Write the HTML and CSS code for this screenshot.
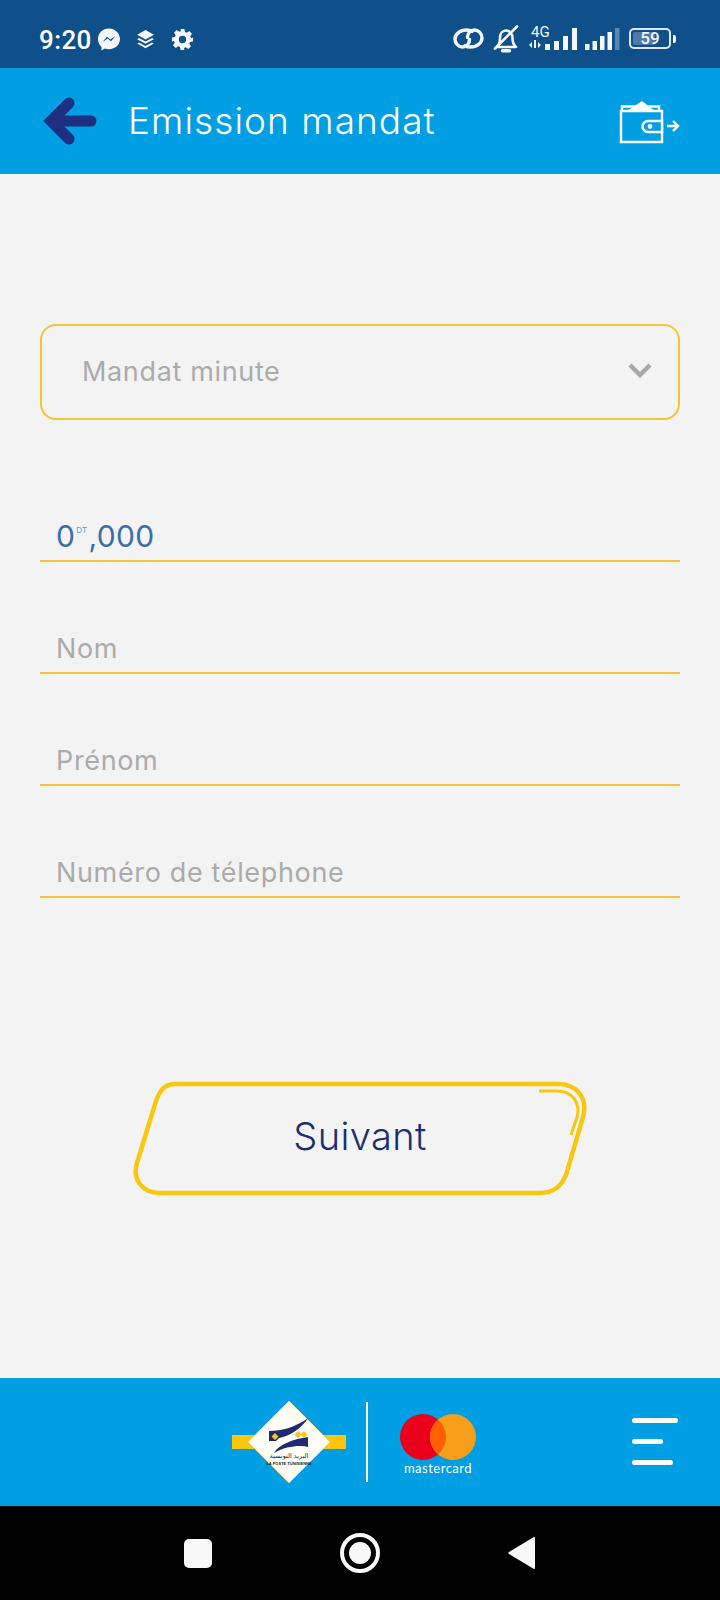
FILE: index.html
```html
<!DOCTYPE html>
<html lang="fr">
<head>
<meta charset="utf-8">
<title>Emission mandat</title>
<link rel="stylesheet" href="styles.css">
</head>
<body>
<div class="app">
  <div class="statusbar">
    <div class="status-left">
      <span class="clock">9:20</span>
      <svg class="ic-msg" viewBox="0 0 24 24"><path class="w" d="M12 1C5.800 1 1 5.500 1 11.600c0 3.200 1.300 5.900 3.500 7.800V23l3.400-1.900c1.300.4 2.700.6 4.100.6 6.200 0 11-4.500 11-10.100S18.200 1 12 1z"/><path class="bluefill" d="M5.500 14.500l4.500-5.300 3.300 2.700 5.200-3.400-4.500 5.300-3.300-2.700z"/></svg>
      <svg class="ic-layers" viewBox="0 0 20 20"><path class="w" d="M10 1l8 4.500-8 4.500-8-4.500z"/><path class="w" d="M3.800 8.600L10 12l6.200-3.400 1.800 1.100-8 4.400-8-4.400z"/><path class="w" d="M3.800 12.800L10 16.200l6.200-3.400 1.800 1.100-8 4.400-8-4.400z"/></svg>
      <svg class="ic-gear" viewBox="0 0 24 24"><path class="w" fill-rule="evenodd" d="M10 1h4l.6 3.100 1.900.8 2.600-1.800 2.800 2.800-1.800 2.600.8 1.900L23 10v4l-3.100.6-.8 1.900 1.800 2.600-2.800 2.800-2.600-1.800-1.900.8L14 23h-4l-.6-3.100-1.900-.8-2.600 1.800-2.800-2.800 1.800-2.600-.8-1.900L1 14v-4l3.100-.6.800-1.900-1.800-2.600 2.800-2.800 2.600 1.800 1.900-.8zM12 8.200a3.800 3.800 0 1 0 0 7.600 3.800 3.800 0 0 0 0-7.600z"/></svg>
    </div>
    <div class="status-right">
      <svg class="ic-link" viewBox="0 0 31 21"><path class="st" d="M19 3.300C17.500 2.400 15.500 2 13.500 2 7 2 2 6 2 11c0 4.500 3.400 8 7.500 8 4.300 0 7-3.500 7-7.500"/><path class="st" d="M12 17.700c1.500.9 3.500 1.300 5.500 1.300C24 19 29 15 29 10c0-4.500-3.400-8-7.500-8-4.300 0-7 3.500-7 7.500"/></svg>
      <svg class="ic-bell" viewBox="0 0 26 28"><path class="st2" d="M4 22c2.500-2.500 3-5 3-9 0-4.500 2.500-7.500 6-7.500s6.500 3 6.500 7.500c0 4 .5 6.500 3.500 9z"/><path class="st2" d="M2 23.500L24 1.500"/><path class="st3" d="M9.500 25.800h7"/></svg>
      <div class="sig">
        <span class="net">4G</span>
        <svg class="ic-bars-a" viewBox="0 0 50 24"><path class="w" d="M3 15l-3 3 3 3zM5 13h2v8H5zM9 15l3 3-3 3z"/><rect class="w" x="16" y="17" width="5" height="6"/><rect class="w" x="25" y="14" width="5" height="9"/><rect class="w" x="34" y="9" width="5" height="14"/><rect class="w" x="43" y="1" width="5" height="22"/></svg>
      </div>
      <svg class="ic-bars-b" viewBox="0 0 36 24"><rect class="w" x="0" y="17" width="4.500" height="6"/><rect class="w" x="7.500" y="14" width="4.500" height="9"/><rect class="w" x="15" y="9" width="4.500" height="14"/><rect class="w" x="22.500" y="5" width="4.500" height="18"/><rect class="dim" x="30" y="1" width="4.500" height="22"/></svg>
      <div class="battery">
        <div class="batt-box"><span class="batt-fill"></span><span class="batt-num">59</span></div>
        <span class="batt-nub"></span>
      </div>
    </div>
  </div>

  <header class="topbar">
    <svg class="back" viewBox="0 0 52 46"><path d="M24 5L6 23l18 18M6 23h40"/></svg>
    <h1 class="title">Emission mandat</h1>
    <svg class="wallet" viewBox="0 0 62 46"><path class="wl" d="M4 13V8.500h37V13"/><path class="wf" d="M9 13L24 3l13 10z"/><path class="wl" d="M3 13h41v31H3z"/><path class="wbg" d="M30 23h14v11H30a5.500 5.500 0 0 1 0-11z"/><circle class="wl" cx="32" cy="28.500" r="1.200"/><path class="wl" d="M49 28h11M55 23l5 5-5 5"/></svg>
  </header>

  <main class="content">
    <div class="select">
      <span class="select-text">Mandat minute</span>
      <svg class="chevron" viewBox="0 0 24 16"><path d="M2 3l10 10L22 3"/></svg>
    </div>
    <div class="fields">
      <div class="field"><span class="amount">0<sup class="cur">DT</sup>,000</span></div>
      <div class="field"><span class="ph">Nom</span></div>
      <div class="field"><span class="ph">Prénom</span></div>
      <div class="field"><span class="ph">Numéro de télephone</span></div>
    </div>
    <button class="next" type="button">
      <svg class="next-shape" viewBox="0 0 460 116"><path class="o" d="M45 3H428C448 3 458 18 453 36L436 94C431 106 423 112 410 112H30C12 112 2 98 7 82L26 20C30 9 35 3 45 3z"/><path class="i" d="M409 10H427C442 10 451 22 447 36L441 54"/></svg>
      <span class="next-label">Suivant</span>
    </button>
  </main>

  <footer class="bottombar">
    <div class="brand">
      <svg class="poste" viewBox="0 0 114 84">
        <rect class="band" x="0" y="35" width="114" height="14"/>
        <path class="dia" d="M57 1L98 42 57 83 16 42z"/>
        <path class="navy" d="M37 31C50 31 64 27 76 18C70 28 58 36 47 38L44 41H37z"/>
        <path class="navy" d="M42 53C47 44 62 39 76 37V47C68 45 54 46 42 53z"/>
        <path class="gold" d="M43 33l3.500 3.500-3.500 3.500-3.500-3.500zM66 31l3.500 3.500-3.500 3.500-3.500-3.500zM72 31l3.500 3.500-3.500 3.500-3.500-3.500z"/>
        <text class="ar" x="57" y="58" text-anchor="middle" direction="rtl">البريد التونسية</text>
        <text class="fr" x="57" y="65" text-anchor="middle">LA POSTE TUNISIENNE</text>
      </svg>
      <span class="divider"></span>
      <div class="mc">
        <svg class="mc-circles" viewBox="0 0 76 46"><circle class="r" cx="23" cy="23" r="23"/><circle class="y" cx="53" cy="23" r="23"/><path class="m" d="M38 5.600a23 23 0 0 1 0 34.800 23 23 0 0 1 0-34.800z"/></svg>
        <span class="mc-text">mastercard</span>
      </div>
    </div>
    <div class="menu"><span class="m1"></span><span class="m2"></span><span class="m3"></span></div>
  </footer>

  <nav class="navbar">
    <span class="nav-square"></span>
    <span class="nav-home"><span class="nav-dot"></span></span>
    <svg class="nav-back" viewBox="0 0 27 32"><path d="M27 1v30a1 1 0 0 1-1.500.8L1 17a1.200 1.200 0 0 1 0-2L25.500.2A1 1 0 0 1 27 1z"/></svg>
  </nav>
</div>
</body>
</html>
```

FILE: styles.css
```css
* { box-sizing: border-box; }
html, body { margin: 0; padding: 0; }
body { width: 720px; height: 1600px; overflow: hidden; background: #f3f3f4; font-family: Inter, "Noto Sans", sans-serif; }
.app { width: 720px; height: 1600px; display: flex; flex-direction: column; }

.statusbar { height: 68px; background: #0f4f8a; display: flex; justify-content: space-between; align-items: center; padding: 9px 44px 0 39px; color: #fff; flex: none; }
.status-left { display: flex; align-items: center; margin-top: 2px; }
.clock { font-family: Roboto, sans-serif; font-weight: 500; font-size: 26px; line-height: 30px; letter-spacing: .4px; width: 58px; }
.w { fill: #f4f7fb; }
.dim { fill: #5c86b2; }
.bluefill { fill: #0f4f8a; }
.ic-msg { width: 24px; height: 25px; }
.ic-layers { width: 21px; height: 21px; margin-left: 14px; }
.ic-gear { width: 23px; height: 23px; margin-left: 15px; }
.status-right { display: flex; align-items: center; }
.st { fill: none; stroke: #f4f7fb; stroke-width: 3.400; stroke-linecap: round; }
.st2 { fill: none; stroke: #f4f7fb; stroke-width: 2.600; stroke-linecap: round; stroke-linejoin: round; }
.st3 { fill: none; stroke: #f4f7fb; stroke-width: 3.400; stroke-linecap: round; }
.ic-link { width: 31px; height: 21px; }
.ic-bell { width: 26px; height: 28px; margin-left: 9px; }
.sig { position: relative; width: 50px; height: 24px; margin-left: 10px; }
.net { position: absolute; left: 2px; top: -2px; font-family: Roboto, sans-serif; font-size: 15px; line-height: 14px; color: #f4f7fb; }
.ic-bars-a { display: block; width: 50px; height: 24px; }
.ic-bars-b { width: 36px; height: 24px; margin-left: 6px; }
.battery { display: flex; align-items: center; margin-left: 8px; }
.batt-box { position: relative; width: 42px; height: 21px; border: 2px solid #dfe8f2; border-radius: 5px; display: flex; align-items: center; justify-content: center; }
.batt-fill { position: absolute; left: 2px; top: 2px; bottom: 2px; width: 22px; background: #4f79a8; border-radius: 2px; }
.batt-num { position: relative; font-family: Roboto, sans-serif; font-weight: 500; font-size: 17px; line-height: 17px; color: #f4f7fb; }
.batt-nub { width: 3px; height: 8px; background: #f4f7fb; margin-left: 2px; border-radius: 0 2px 2px 0; }

.topbar { height: 106px; background: #009fe3; display: flex; align-items: center; padding: 0 40px 0 45px; flex: none; }
.back { width: 52px; height: 46px; flex: none; overflow: visible; }
.back path { fill: none; stroke: #1c2f80; stroke-width: 11; stroke-linecap: round; stroke-linejoin: miter; }
.title { margin: 0 0 0 31px; flex: 1; font-weight: 300; font-size: 37px; line-height: 44px; letter-spacing: 1.050px; color: #fff; }
.wallet { width: 62px; height: 46px; flex: none; }
.wl { fill: none; stroke: #fff; stroke-width: 2.400; }
.wf { fill: #fff; }
.wbg { fill: #009fe3; stroke: #fff; stroke-width: 2.400; }

.content { flex: 1; padding: 150px 40px 0; display: flex; flex-direction: column; }
.select { height: 96px; border: 2px solid #f2c534; border-radius: 16px; padding: 0 26px 4px 40px; display: flex; align-items: center; justify-content: space-between; }
.select-text { font-size: 27px; line-height: 34px; letter-spacing: .65px; color: #ababab; margin-top: 3px; }
.chevron { width: 24px; height: 16px; }
.chevron path { fill: none; stroke: #a8a8a8; stroke-width: 4.500; }
.fields { display: flex; flex-direction: column; margin-top: 30px; }
.field { height: 112px; border-bottom: 2px solid #f2c534; padding: 0 16px 6px; display: flex; align-items: flex-end; }
.ph { font-size: 27px; line-height: 34px; letter-spacing: .65px; color: #ababab; }
.amount { font-size: 30px; line-height: 36px; letter-spacing: .3px; color: #3a6ea5; }
.cur { font-size: 8px; line-height: 0; vertical-align: 14px; color: #4aa3d8; margin: 0 1px; }
.next { position: relative; align-self: center; width: 460px; height: 116px; margin-top: 183px; padding: 0; border: 0; background: none; display: flex; align-items: center; justify-content: center; font-family: inherit; }
.next-shape { position: absolute; inset: 0; width: 460px; height: 116px; overflow: visible; }
.o, .i { fill: none; stroke: #f9c80e; }
.o { stroke-width: 4.500; }
.i { stroke-width: 3; }
.next-label { position: relative; font-size: 38px; font-weight: 300; line-height: 46px; letter-spacing: .4px; color: #1b2e70; margin-top: -6px; }

.bottombar { height: 128px; background: #009fe3; display: flex; align-items: center; justify-content: space-between; padding: 0 42px 0 232px; flex: none; }
.brand { display: flex; align-items: center; }
.poste { width: 114px; height: 84px; }
.band { fill: #fcc60f; }
.dia { fill: #fffef6; stroke: #e8d98a; stroke-width: 1; }
.navy { fill: #1f2a70; }
.gold { fill: #f5c518; }
.ar { font-family: "DejaVu Sans", sans-serif; font-size: 6.500px; fill: #222; }
.fr { font-family: "Liberation Sans", sans-serif; font-weight: 700; font-size: 4px; fill: #222; }
.divider { width: 2px; height: 80px; background: #fff; margin-left: 20px; }
.mc { display: flex; flex-direction: column; align-items: center; margin-left: 32px; margin-top: 5px; }
.mc-circles { width: 76px; height: 46px; display: block; }
.r { fill: #eb001b; }
.y { fill: #f79e1b; }
.m { fill: #ff5f00; }
.mc-text { font-family: Lato, sans-serif; font-size: 13px; line-height: 16px; letter-spacing: .5px; color: #fff; }
.menu { display: flex; flex-direction: column; gap: 16px; width: 46px; margin-top: -2px; }
.menu span { display: block; height: 5px; background: #fff; border-radius: 3px; }
.m1 { width: 46px; }
.m2 { width: 31px; }
.m3 { width: 41px; }

.navbar { height: 94px; background: #000; display: flex; align-items: center; padding: 0 0 0 184px; flex: none; }
.nav-square { width: 28px; height: 29px; background: #f8f8f8; border-radius: 5px; }
.nav-home { width: 40px; height: 40px; border: 4px solid #f8f8f8; border-radius: 50%; margin-left: 128px; display: flex; align-items: center; justify-content: center; }
.nav-dot { width: 22px; height: 22px; background: #f8f8f8; border-radius: 50%; }
.nav-back { width: 27px; height: 32px; margin-left: 128px; }
.nav-back path { fill: #f8f8f8; }
```
